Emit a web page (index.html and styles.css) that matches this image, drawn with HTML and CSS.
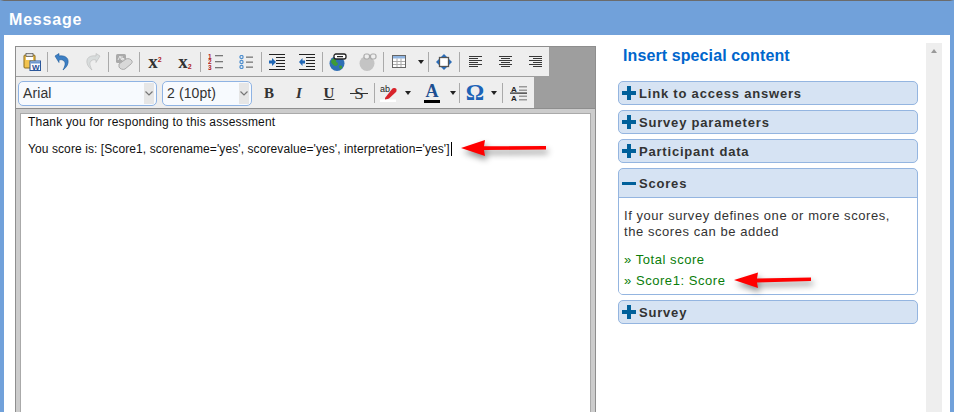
FILE: index.html
```html
<!DOCTYPE html>
<html lang="en">
<head>
<meta charset="utf-8">
<title>Message</title>
<link rel="stylesheet" href="styles.css">
</head>
<body>
<div class="window">
  <header class="title">Message</header>
  <div class="main">
    <section class="editor">
      <div class="toolbars">
        <div class="toolbar row1">
          <span class="btn"><svg width="18" height="18" viewBox="0 0 18 18"><rect x="1" y="2" width="11" height="13" rx="1" fill="#f2c34e" stroke="#8a6a1a"/><rect x="3" y="0.5" width="7" height="3" fill="#ddd" stroke="#555" stroke-width=".7"/><rect x="3" y="4" width="7" height="3" fill="#fff"/><rect x="7" y="8" width="10.500" height="9.500" fill="#fff" stroke="#2b579a"/><rect x="7.500" y="8.500" width="9.500" height="2" fill="#6d97cf"/><text x="9" y="16.500" class="word">W</text></svg></span>
          <i class="sep"></i>
          <span class="btn shift-l"><svg width="16" height="18" viewBox="0 0 16 18"><path d="M1 3 L5 0.500 L5 3 C11 2 15 5 14 10 C13.500 13 11 15.500 9 17 C11 13 12 10 10 8 C8.500 6.500 6.500 6.500 5 7 L5 9.500 Z" fill="#3d7fc4" stroke="#1c5a9a" stroke-width=".6"/></svg></span>
          <span class="btn"><svg width="16" height="18" viewBox="0 0 16 18"><path d="M15 3 L11 0.500 L11 3 C5 2 1 5 2 10 C2.500 13 5 15.500 7 17 C5 13 4 10 6 8 C7.500 6.500 9.500 6.500 11 7 L11 9.500 Z" fill="#d8dcdc" stroke="#bbb" stroke-width=".6"/></svg></span>
          <i class="sep"></i>
          <span class="btn"><svg width="18" height="16" viewBox="0 0 18 16"><rect x="1" y="0" width="10" height="9" rx="1.500" fill="#aaa"/><path d="M3 6 L5 2 L6.500 6 M7 6 V2 M7 4.500 H9 V6 H7" fill="none" stroke="#eee" stroke-width=".9"/><path d="M4 10 L11 5 C13 4 16 5 17 7 C17.500 8 17 9 16 10 L10 15 C8 16 5 15 4 13 Z" fill="#d8d8d8" stroke="#aaa"/></svg></span>
          <i class="sep"></i>
          <span class="btn glyph"><span>x<sup>2</sup></span></span>
          <span class="btn glyph"><span>x<sub>2</sub></span></span>
          <i class="sep"></i>
          <span class="btn"><svg width="16" height="17" viewBox="0 0 16 17"><g class="digits"><text x="0" y="5.500">1</text><text x="0" y="11">2</text><text x="0" y="16.500">3</text></g><g fill="#777"><rect x="7" y="2" width="8" height="1.300"/><rect x="7" y="8" width="8" height="1.300"/><rect x="7" y="14" width="8" height="1.300"/></g></svg></span>
          <span class="btn"><svg width="14" height="14" viewBox="0 0 14 14"><g fill="none" stroke="#4f8fcf" stroke-width="1.200"><circle cx="2.500" cy="2" r="1.600"/><circle cx="2.500" cy="7" r="1.600"/><circle cx="2.500" cy="12" r="1.600"/></g><g fill="#777"><rect x="7" y="1.500" width="7" height="1.300"/><rect x="7" y="6.500" width="7" height="1.300"/><rect x="7" y="11.500" width="7" height="1.300"/></g></svg></span>
          <i class="sep"></i>
          <span class="btn"><svg width="16" height="16" viewBox="0 0 16 16"><g fill="#222"><rect y="0" width="16" height="1"/><rect y="15" width="16" height="1"/><rect x="7" y="3" width="9" height="1"/><rect x="7" y="6" width="9" height="1"/><rect x="7" y="9" width="9" height="1"/><rect x="7" y="12" width="9" height="1"/></g><path d="M0 6.500 H3 V4 L7 8 L3 12 V9.500 H0 Z" fill="#1f66b5"/></svg></span>
          <span class="btn"><svg width="16" height="16" viewBox="0 0 16 16"><g fill="#222"><rect y="0" width="16" height="1"/><rect y="15" width="16" height="1"/><rect x="7" y="3" width="9" height="1"/><rect x="7" y="6" width="9" height="1"/><rect x="7" y="9" width="9" height="1"/><rect x="7" y="12" width="9" height="1"/></g><path d="M6 6.500 H3.500 V4 L0 8 L3.500 12 V9.500 H6 Z" fill="#1f66b5"/></svg></span>
          <i class="sep"></i>
          <span class="btn"><svg width="18" height="18" viewBox="0 0 18 18"><circle cx="8" cy="10.500" r="7.500" fill="#2f6fb5"/><path d="M3 6 C6 5 8 7 7 9 C9 9 10 12 7 13 C5 13 3 11 2 9 Z M10 13 C12 12 14 13 13 15 C12 17 10 16 10 13 Z" fill="#3e9a38"/><rect x="5" y="1" width="12" height="5" rx="2" fill="#fff" stroke="#222" stroke-width="1.300"/><rect x="8" y="3" width="6" height="1.200" fill="#222"/></svg></span>
          <span class="btn"><svg width="18" height="18" viewBox="0 0 18 18"><circle cx="8" cy="10.500" r="7.500" fill="#c4c4c4"/><rect x="5" y="1" width="5.500" height="5" rx="2" fill="#eee" stroke="#aaa" stroke-width="1.200"/><rect x="11.500" y="1" width="5.500" height="5" rx="2" fill="#eee" stroke="#aaa" stroke-width="1.200"/></svg></span>
          <i class="sep"></i>
          <span class="btn"><svg width="14" height="13" viewBox="0 0 14 13"><rect x=".5" y=".5" width="13" height="12" fill="#fff" stroke="#666"/><rect x="1" y="1" width="12" height="2.500" fill="#8fb4e0"/><path d="M1 6.500 H13 M1 9.500 H13 M5 3.500 V12 M9 3.500 V12" stroke="#aaa" fill="none"/></svg></span>
          <span class="dd"><b class="caret"></b></span>
          <i class="sep"></i>
          <span class="btn"><svg width="16" height="16" viewBox="0 0 16 16"><rect x="3.500" y="3.500" width="9" height="9" fill="#fff" stroke="#555" stroke-width="1.300"/><g fill="#2c6cb5"><path d="M8 0 L11 3 H5 Z"/><path d="M8 16 L11 13 H5 Z"/><path d="M0 8 L3 5 V11 Z"/><path d="M16 8 L13 5 V11 Z"/></g></svg></span>
          <i class="sep"></i>
          <span class="btn"><svg width="13" height="11" viewBox="0 0 13 11"><path d="M0 .5 H13 M0 2.500 H9 M0 4.500 H13 M0 6.500 H9 M0 8.500 H13 M0 10.500 H9" stroke="#222" fill="none" stroke-width=".9"/></svg></span>
          <span class="btn"><svg width="13" height="11" viewBox="0 0 13 11"><path d="M0 .5 H13 M2 2.500 H11 M0 4.500 H13 M2 6.500 H11 M0 8.500 H13 M2 10.500 H11" stroke="#222" fill="none" stroke-width=".9"/></svg></span>
          <span class="btn"><svg width="13" height="11" viewBox="0 0 13 11"><path d="M0 .5 H13 M4 2.500 H13 M0 4.500 H13 M4 6.500 H13 M0 8.500 H13 M4 10.500 H13" stroke="#222" fill="none" stroke-width=".9"/></svg></span>
        </div>
        <div class="toolbar row2">
          <div class="select font"><span class="select-text">Arial</span><span class="select-arrow"><svg width="8" height="5" viewBox="0 0 8 5"><path d="M.5 .5 L4 4 L7.500 .5" fill="none" stroke="#777" stroke-width="1.200"/></svg></span></div>
          <div class="select size"><span class="select-text">2 (10pt)</span><span class="select-arrow"><svg width="8" height="5" viewBox="0 0 8 5"><path d="M.5 .5 L4 4 L7.500 .5" fill="none" stroke="#777" stroke-width="1.200"/></svg></span></div>
          <span class="btn fmt bold">B</span>
          <span class="btn fmt ital">I</span>
          <span class="btn fmt under">U</span>
          <span class="btn fmt strike"><span class="strike-s">S</span></span>
          <i class="sep"></i>
          <span class="btn narrow"><svg width="17" height="17" viewBox="0 0 17 17"><text x="0" y="7" class="ab">ab</text><path d="M5 13 L12 4 C13 3 15 2.500 16 3.500 C17 4.500 16.500 6 16 7 L9 13.500 L5 15 Z" fill="#d8232a"/><rect x="0" y="14.500" width="16" height="2.500" fill="#fff"/></svg></span>
          <span class="dd w15"><b class="caret"></b></span>
          <span class="btn fcolor"><span class="a-letter">A</span></span>
          <span class="dd w12"><b class="caret"></b></span>
          <i class="sep"></i>
          <span class="btn omega">Ω</span>
          <span class="dd w12 pull"><b class="caret"></b></span>
          <i class="sep"></i>
          <span class="btn"><svg width="17" height="16" viewBox="0 0 17 16"><text x="1" y="6.500" class="lh">A</text><text x="1" y="15.500" class="lh">A</text><rect y="7.500" width="17" height="1.200" fill="#222"/><g fill="#999"><rect x="9" y="1" width="8" height="1.500"/><rect x="9" y="4.500" width="8" height="1.500"/><rect x="9" y="10.500" width="8" height="1.500"/><rect x="9" y="14" width="8" height="1.500"/></g></svg></span>
        </div>
      </div>
      <div class="frame">
        <div class="content">
          <p class="line-a">Thank you for responding to this assessment</p>
          <p class="line-b">You score is: [Score1, scorename='yes', scorevalue='yes', interpretation='yes']<span class="cursor"></span></p>
        </div>
      </div>
    </section>
    <aside class="side">
      <h2>Insert special content</h2>
      <div class="panel"><div class="panel-head"><span class="plus"></span>Link to access answers</div></div>
      <div class="panel"><div class="panel-head"><span class="plus"></span>Survey parameters</div></div>
      <div class="panel"><div class="panel-head"><span class="plus"></span>Participant data</div></div>
      <div class="panel open">
        <div class="panel-head tall"><span class="plus minus"></span>Scores</div>
        <div class="panel-body">
          <p>If your survey defines one or more scores, the scores can be added</p>
          <a class="link first">» Total score</a>
          <a class="link">» Score1: Score</a>
        </div>
      </div>
      <div class="panel"><div class="panel-head"><span class="plus"></span>Survey</div></div>
    </aside>
    <div class="scrollbar"><b class="up"></b></div>
  </div>
  <svg class="arrow arrow-a" width="88" height="20" viewBox="0 0 88 20"><path d="M0 10 L24 2 L23 8.300 L85 8 L85 11.500 L23 12 L24 18 Z" fill="#f00"/></svg>
  <svg class="arrow arrow-b" width="80" height="20" viewBox="0 0 80 20"><path d="M0 10 L24 2.500 L23 8.500 L77 7.500 L77 11 L23 12.500 L24 18 Z" fill="#f00"/></svg>
</div>
</body>
</html>
```
FILE: styles.css
```css
* { box-sizing: border-box; }
html, body { margin: 0; padding: 0; height: 412px; overflow: hidden; background: #fff; }
body { font-family: "Liberation Sans", Arial, sans-serif; }

.window {
  position: relative;
  width: 954px;
  height: 412px;
  overflow: hidden;
  background: #fff;
  border-top: 1px solid #6b6b6b;
  border-left: 4px solid #71a1da;
  border-right: 4px solid #71a1da;
}
.title {
  height: 34px;
  margin: 0 -4px;
  padding: 0 9px;
  background: #71a1da;
  color: #fff;
  font-size: 16px;
  font-weight: 700;
  line-height: 37px;
  letter-spacing: .8px;
}
.main { display: flex; align-items: flex-start; height: 377px; }

/* editor */
.editor {
  width: 581px;
  height: 400px;
  margin: 11px 0 0 11px;
  border: 1px solid #8e8e8e;
  background: #9e9e9e;
  flex: none;
}
.toolbars { display: flex; flex-direction: column; }
.toolbar { display: flex; align-items: center; background: #eee; }
.row1 { width: 533px; height: 29px; padding-left: 1px; }
.row2 { width: 518px; height: 31px; margin-top: 1px; padding: 1px 0 0 2px; }
.btn { display: flex; align-items: center; justify-content: center; width: 30px; height: 22px; flex: none; }
.btn svg { display: block; }
.shift-l { padding-right: 2px; }
.narrow { width: 27px; }
.sep { display: block; width: 1px; height: 20px; background: #aaa; flex: none; }
.dd { display: flex; align-items: center; justify-content: center; width: 14px; height: 22px; flex: none; }
.w15 { width: 15px; padding-right: 3px; }
.w12 { width: 12px; }
.pull { padding-right: 5px; }
.caret { display: block; width: 0; height: 0; border: 3.5px solid transparent; border-top: 4px solid #222; border-bottom: 0; flex: none; }
.word { font: 700 8px "Liberation Sans", sans-serif; fill: #1f4e96; }
.ab { font: 9px "Liberation Sans", sans-serif; fill: #222; }
.lh { font: 700 8px "Liberation Sans", sans-serif; fill: #222; }
.digits { font: 700 6.500px "Liberation Sans", sans-serif; fill: #b01c1c; }
.glyph { font: 700 19px/20px "Liberation Serif", serif; color: #333; }
.glyph sup, .glyph sub { font: 700 7px "Liberation Sans", sans-serif; color: #b01c1c; line-height: 0; }
.glyph sup { vertical-align: 6px; }
.glyph sub { vertical-align: -1px; }
.fmt { font: 700 15px "Liberation Serif", serif; color: #333; }
.ital { font-style: italic; }
.under { text-decoration: underline; }
.strike { font-weight: 400; }
.strike-s { position: relative; display: block; font-size: 17px; line-height: 17px; }
.strike-s::after { content: ""; position: absolute; left: -4px; right: -4px; top: 8px; height: 1px; background: #333; }
.a-letter {
  display: block;
  width: 16px;
  font: 700 18px/17px "Liberation Serif", serif;
  color: #1d4f91;
  text-align: center;
  border-bottom: 3px solid #000;
}
.omega { font: 700 23px "Liberation Serif", serif; color: #1c63b7; }

.select {
  display: flex;
  align-items: center;
  height: 25px;
  border: 1px solid #8fb3e3;
  border-radius: 5px;
  background: #f7fafe;
  flex: none;
}
.font { width: 139px; margin-right: 5px; }
.size { width: 90px; margin-right: 2px; }
.select-text { flex: 1; padding-left: 4px; font-size: 14px; letter-spacing: .1px; color: #333; }
.select-arrow {
  display: flex;
  align-items: center;
  justify-content: center;
  width: 10px;
  height: 21px;
  margin-right: 2px;
  background: #e6e6e6;
}

.frame {
  height: 340px;
  background: #ccc;
  border-top: 1px solid #8e8e8e;
  padding: 4px 4px 0;
}
.content {
  height: 320px;
  padding: 1px 7px 0;
  background: #fff;
  border: 1px solid #aaa;
  border-bottom: 0;
  font-size: 12px;
  line-height: 14px;
  color: #111;
}
.content p { margin: 0 0 13px; }
.line-a { letter-spacing: .2px; }
.line-b { letter-spacing: .09px; }
.cursor { display: inline-block; width: 1px; height: 14px; margin-left: 1px; background: #000; vertical-align: bottom; }

/* side */
.side { width: 300px; margin-left: 22px; flex: none; }
.side h2 {
  margin: 0;
  padding: 11px 0 0 5px;
  height: 46px;
  font-size: 16px;
  line-height: 19px;
  font-weight: 700;
  letter-spacing: .1px;
  color: #0066cc;
}
.panel { margin-bottom: 5px; border: 1px solid #94b5e0; border-radius: 5px; background: #d6e3f3; overflow: hidden; }
.panel-head {
  display: flex;
  align-items: center;
  height: 22px;
  padding-left: 3px;
  font-size: 13px;
  font-weight: 700;
  letter-spacing: .8px;
  color: #333;
}
.tall { height: 28px; }
.plus { position: relative; display: block; width: 14px; height: 14px; margin-right: 3px; flex: none; }
.plus::before { content: ""; position: absolute; left: 0; right: 0; top: 5px; height: 4px; background: #00609a; }
.plus::after { content: ""; position: absolute; top: 0; bottom: 0; left: 5px; width: 4px; background: #00609a; }
.minus::after { display: none; }
.minus::before { top: 6px; height: 3px; }
.panel-body {
  height: 97px;
  padding: 10px 20px 0 5px;
  background: #fff;
  border-top: 1px solid #94b5e0;
  font-size: 13px;
  line-height: 16px;
  letter-spacing: .55px;
  color: #333;
}
.panel-body p { margin: 0 0 10px; }
.link { display: block; height: 21px; line-height: 21px; color: #0a7d0a; }
.first { margin-top: -1px; }

.scrollbar { position: relative; width: 16px; height: 380px; margin: 8px 0 0 8px; background: #eee; flex: none; }
.up { position: absolute; left: 5px; top: 6px; width: 0; height: 0; border: 3.5px solid transparent; border-bottom: 4px solid #999; border-top: 0; }

.arrow { position: absolute; filter: drop-shadow(2px 4px 3px rgba(0,0,0,.45)); overflow: visible; }
.arrow-a { left: 457px; top: 137px; }
.arrow-b { left: 730px; top: 269px; }
```
